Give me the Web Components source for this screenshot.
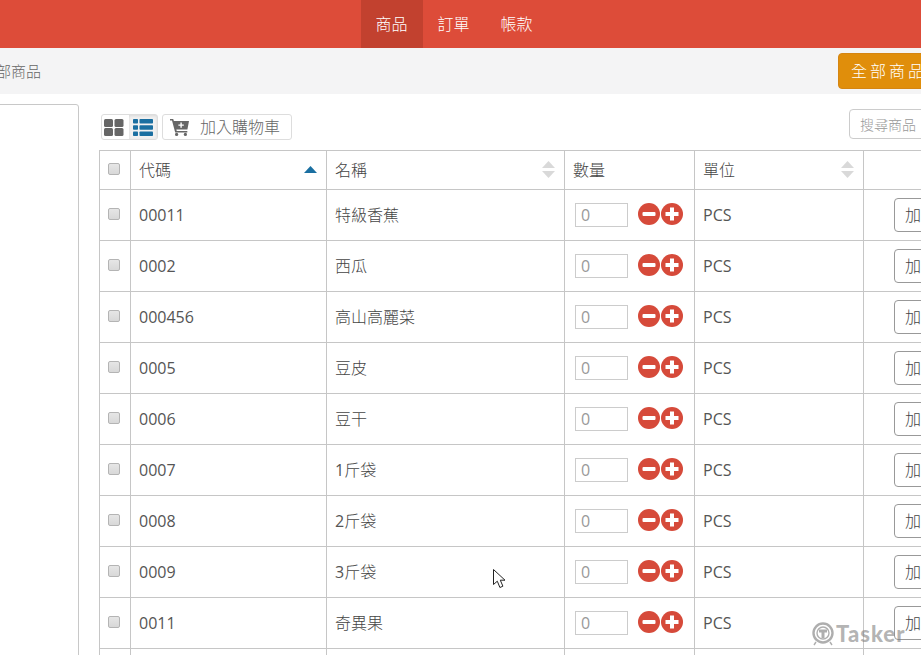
<!DOCTYPE html>
<html lang="zh-Hant">
<head>
<meta charset="utf-8">
<title>商品</title>
<style>
    html, body { margin: 0; height: 100%; overflow: hidden; background: #fff; }
    body { font: 16px "Open Sans", "Noto Sans CJK TC", sans-serif; color: #555; }
    #page { display: block; width: 1188px; margin-left: -140px; }
</style>
</head>
<body>
<shop-page id="page">
    <top-nav></top-nav>
    <sub-bar></sub-bar>
    <div slot="side"></div>
    <product-toolbar slot="main"></product-toolbar>
    <product-table slot="main">
        <product-row code="00011" name="特級香蕉"></product-row>
        <product-row code="0002" name="西瓜"></product-row>
        <product-row code="000456" name="高山高麗菜"></product-row>
        <product-row code="0005" name="豆皮"></product-row>
        <product-row code="0006" name="豆干"></product-row>
        <product-row code="0007" name="1斤袋"></product-row>
        <product-row code="0008" name="2斤袋"></product-row>
        <product-row code="0009" name="3斤袋"></product-row>
        <product-row code="0011" name="奇異果"></product-row>
        <product-row blank></product-row>
    </product-table>
</shop-page>
<tasker-mark></tasker-mark>
<mouse-cursor></mouse-cursor>

<script>
class ShopPage extends HTMLElement {
    constructor() {
        super();
        this.attachShadow({ mode: "open" });
        this.shadowRoot.innerHTML = `
            <style>
                :host { display: block; }
                .content { display: flex; padding: 10px 0 0 40px; gap: 21px; }
                .side { width: 177px; height: 700px; flex: none; border: 1px solid #c8c8c8; border-radius: 3px; }
                .main { flex: 1; min-width: 0; }
            </style>
            <slot></slot>
            <div class="content">
                <div class="side"><slot name="side"></slot></div>
                <div class="main"><slot name="main"></slot></div>
            </div>
        `;
    }
}

class TopNav extends HTMLElement {
    constructor() {
        super();
        this.attachShadow({ mode: "open" });
        this.shadowRoot.innerHTML = `
            <style>
                :host { display: flex; justify-content: center; height: 48px; background: #dd4c39; }
                a { display: flex; align-items: center; padding: 0 15px 2px; color: #fff; text-decoration: none; font-size: 16px; font-weight: 300; width: 32px; white-space: nowrap; }
                a.on { background: #c2412f; }
                a:last-child { margin-left: 1px; }
            </style>
            <a class="on" href="#">商品</a>
            <a href="#">訂單</a>
            <a href="#">帳款</a>
        `;
    }
}

class SubBar extends HTMLElement {
    constructor() {
        super();
        this.attachShadow({ mode: "open" });
        this.shadowRoot.innerHTML = `
            <style>
                :host { display: flex; justify-content: space-between; align-items: flex-start; height: 46px; background: #f4f4f5; padding-left: 121px; }
                span { font-size: 15px; font-weight: 300; line-height: 46px; color: #666; }
                button {
                    width: 210px; height: 36px; margin-top: 5px; padding: 0 0 2px 12px; text-align: left;
                    border: 1px solid #d58512; border-radius: 4px; background: #e08e0b; color: #fff;
                    font: 300 16px "Open Sans", "Noto Sans CJK TC", sans-serif; letter-spacing: 3px;
                }
            </style>
            <span>全部商品</span>
            <button>全部商品</button>
        `;
    }
}

class ProductToolbar extends HTMLElement {
    constructor() {
        super();
        this.attachShadow({ mode: "open" });
        this.shadowRoot.innerHTML = `
            <style>
                :host { display: flex; height: 46px; align-items: flex-start; padding-left: 1px; color: #666; }
                .toggle { display: flex; height: 26px; margin-top: 10px; box-sizing: border-box; border: 1px solid #ddd; border-radius: 3px; }
                .toggle span { display: flex; align-items: center; box-sizing: border-box; width: 27px; padding-left: 2px; }
                .toggle span + span { width: 28px; padding-left: 4px; background: #f1f1f1; box-shadow: inset 0 1px 3px rgba(0,0,0,.1); }
                .cart {
                    display: flex; align-items: center; gap: 11px; width: 130px; height: 26px; margin: 10px 0 0 4px; padding: 0 0 2px 7px;
                    box-sizing: border-box; border: 1px solid #ddd; border-radius: 3px; background: #fff; color: #666;
                    font: 300 16px "Open Sans", "Noto Sans CJK TC", sans-serif;
                }
                .cart svg { margin-top: 2px; }
                input {
                    margin: 5px 0 0 auto; width: 199px; height: 30px; box-sizing: border-box; padding: 0 10px;
                    border: 1px solid #ccc; border-radius: 4px; font: 300 14px "Open Sans", "Noto Sans CJK TC", sans-serif;
                }
                input::placeholder { color: #999; opacity: 1; }
            </style>
            <div class="toggle">
                <span>
                    <svg width="20" height="17" viewBox="0 0 20 17" fill="#666">
                        <rect width="9" height="8" rx="1.5"/><rect x="10.5" width="9" height="8" rx="1.5"/>
                        <rect y="9" width="9" height="8" rx="1.5"/><rect x="10.5" y="9" width="9" height="8" rx="1.5"/>
                    </svg>
                </span>
                <span>
                    <svg width="20" height="17" viewBox="0 0 20 17" fill="#1a6fa1">
                        <rect width="5" height="4.6" rx=".8"/><rect x="6.5" width="13.5" height="4.6" rx=".8"/>
                        <rect y="6.2" width="5" height="4.6" rx=".8"/><rect x="6.5" y="6.2" width="13.5" height="4.6" rx=".8"/>
                        <rect y="12.4" width="5" height="4.6" rx=".8"/><rect x="6.5" y="12.4" width="13.5" height="4.6" rx=".8"/>
                    </svg>
                </span>
            </div>
            <button class="cart">
                <svg width="19" height="17" viewBox="0 0 19 17">
                    <path fill="#666" d="M0 0h3.200l.7 2H19l-1.600 8.600H6.400l.3 1.400h10.600v1.600H5.200L2 1.600H0z"/>
                    <circle fill="#666" cx="6.600" cy="15.400" r="1.600"/><circle fill="#666" cx="15.400" cy="15.400" r="1.600"/>
                    <path fill="#fff" d="M10.400 3.400h1.400v2h2v1.400h-2v2h-1.400v-2h-2V5.400h2z"/>
                </svg>
                加入購物車
            </button>
            <input placeholder="搜尋商品">
        `;
    }
}

const COLS = "31px 196px 238px 130px 169px 1fr";

class ProductTable extends HTMLElement {
    constructor() {
        super();
        this.attachShadow({ mode: "open" });
        const updown = `<svg width="13" height="17" viewBox="0 0 13 17" fill="#d9d9d9"><path d="M6.500 0l6.500 7H0z"/><path d="M0 10h13l-6.500 7z"/></svg>`;
        this.shadowRoot.innerHTML = `
            <style>
                :host { display: block; border: solid #c6c6c6; border-width: 1px 1px 0 1px; margin-left: -1px; }
                .head { display: grid; grid-template-columns: ${COLS}; height: 39px; color: #444; font-weight: 300; }
                .head > div {
                    display: flex; align-items: center; justify-content: space-between;
                    box-sizing: border-box; padding: 0 9px 0 8px; border: solid #c6c6c6; border-width: 0 1px 1px 0;
                }
                .head > div:last-child { border-right: 0; }
                .head > .c { justify-content: center; padding: 0 2px 0 0; }
                .head svg { margin-top: -1px; }
                .head b { font-weight: inherit; margin-top: -2px; }
                i {
                    display: block; width: 12px; height: 12px; box-sizing: border-box; margin-top: -2px; border: 1px solid #b4b4b4;
                    border-radius: 2px; background: linear-gradient(#e6e6e6, #d8d8d8);
                }
            </style>
            <div class="head">
                <div class="c"><i></i></div>
                <div><b>代碼</b> <svg width="13" height="7" viewBox="0 0 13 7" fill="#1a6fa1"><path d="M6.500 0l6.500 7H0z"/></svg></div>
                <div><b>名稱</b> ${updown}</div>
                <div><b>數量</b></div>
                <div><b>單位</b> ${updown}</div>
                <div></div>
            </div>
            <slot></slot>
        `;
    }
}

class ProductRow extends HTMLElement {
    constructor() {
        super();
        this.attachShadow({ mode: "open" });
        const blank = this.hasAttribute("blank");
        const code = this.getAttribute("code") || "";
        // digits keep the regular weight, only the CJK part is light
        const name = (this.getAttribute("name") || "").replace(/\d+/, "<b>$&</b>");
        this.shadowRoot.innerHTML = `
            <style>
                :host { display: grid; grid-template-columns: ${COLS}; height: 51px; color: #555; }
                .cell { display: flex; align-items: center; box-sizing: border-box; padding-left: 8px; border: solid #c6c6c6; border-width: 0 1px 1px 0; }
                .cell:last-child { border-right: 0; padding-left: 30px; }
                .check { justify-content: center; padding: 0 2px 0 0; }
                i {
                    display: block; width: 12px; height: 12px; margin-top: -2px; box-sizing: border-box; border: 1px solid #b4b4b4;
                    border-radius: 2px; background: linear-gradient(#e6e6e6, #d8d8d8);
                }
                .name span { margin-top: -2px; font-weight: 300; color: #444; }
                .name b { font-weight: 400; color: #555; }
                .qty { padding-left: 10px; }
                .qty input {
                    width: 53px; height: 24px; box-sizing: border-box; margin: 0 10px 0 0; padding: 0 5px;
                    border: 1px solid #ccc; color: #999; background: #fff; font: 16px "Open Sans", sans-serif;
                }
                .qty svg { display: block; margin: -2px 1px 0 0; }
                button {
                    flex: none; width: 120px; height: 34px; margin-top: -1px; padding: 0 0 2px 10px; text-align: left;
                    border: 1px solid #999; border-radius: 4px; background: #fff; color: #444;
                    font: 300 16px "Open Sans", "Noto Sans CJK TC", sans-serif;
                }
            </style>
            <div class="cell check">${blank ? "" : "<i></i>"}</div>
            <div class="cell">${code}</div>
            <div class="cell name"><span>${name}</span></div>
            <div class="cell qty">${blank ? "" : `
                <input value="0">
                <svg width="22" height="22" viewBox="0 0 22 22"><circle cx="11" cy="11" r="11" fill="#d64a3a"/><rect x="4.500" y="9" width="13" height="4" rx="1" fill="#fff"/></svg>
                <svg width="22" height="22" viewBox="0 0 22 22"><circle cx="11" cy="11" r="11" fill="#d64a3a"/><path fill="#fff" d="M9 4.500h4V9h4.500v4H13v4.500H9V13H4.500V9H9z"/></svg>
            `}</div>
            <div class="cell">${blank ? "" : "PCS"}</div>
            <div class="cell">${blank ? "" : "<button>加入購物車</button>"}</div>
        `;
    }
}

class TaskerMark extends HTMLElement {
    constructor() {
        super();
        this.attachShadow({ mode: "open" });
        this.shadowRoot.innerHTML = `
            <style>
                :host {
                    position: absolute; left: 812px; top: 622px; display: flex; align-items: center; gap: 2px;
                    font: 900 22px Lato, "Open Sans", sans-serif; letter-spacing: 1px; color: rgba(130,130,130,.6); line-height: 24px;
                }
            </style>
            <svg width="22" height="24" viewBox="0 0 22 24" fill="none" stroke="rgba(130,130,130,.65)">
                <circle cx="11" cy="11" r="9.500" stroke-width="2.400"/>
                <circle cx="11" cy="11" r="6" stroke-width="1.400"/>
                <path stroke-width="3" d="M7 9h8M11 9v7"/>
                <path stroke-width="1.400" d="M4 20l-2 3M18 20l2 3"/>
            </svg>
            <span>Tasker</span>
        `;
    }
}

class MouseCursor extends HTMLElement {
    constructor() {
        super();
        this.attachShadow({ mode: "open" });
        this.shadowRoot.innerHTML = `
            <style>:host { position: absolute; left: 493px; top: 569px; display: block; line-height: 0; }</style>
            <svg width="13" height="20" viewBox="0 0 13 20">
                <path fill="#fff" stroke="#222" d="M.5.500v15l3.800-3.300 2.600 6.300 3-1.300-2.600-6h4.700z"/>
            </svg>
        `;
    }
}

customElements.define("shop-page", ShopPage);
customElements.define("top-nav", TopNav);
customElements.define("sub-bar", SubBar);
customElements.define("product-toolbar", ProductToolbar);
customElements.define("product-table", ProductTable);
customElements.define("product-row", ProductRow);
customElements.define("tasker-mark", TaskerMark);
customElements.define("mouse-cursor", MouseCursor);
</script>
</body>
</html>
